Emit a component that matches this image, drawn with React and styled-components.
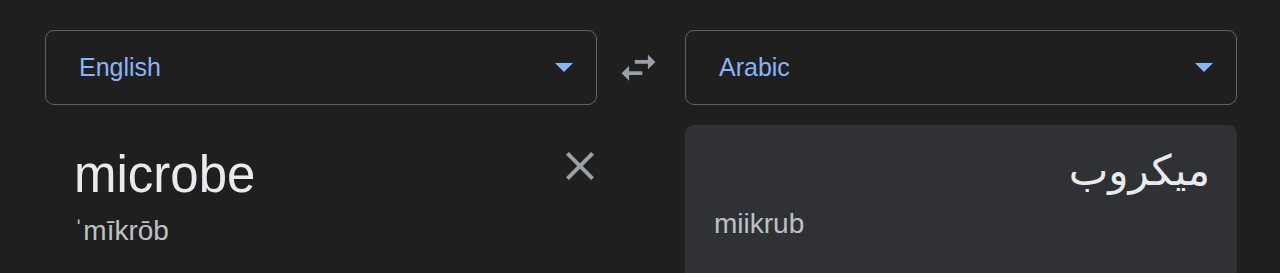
import React from "react";
import styled, { createGlobalStyle } from "styled-components";

const GlobalStyle = createGlobalStyle`
  html, body {
    margin: 0;
    padding: 0;
    background: #1f1f1f;
    font-family: "Liberation Sans", Arial, sans-serif;
  }
`;

const Page = styled.div`
  width: 1280px;
  height: 273px;
  overflow: hidden;
  box-sizing: border-box;
  padding: 30px 43px 0 45px;
  display: grid;
  grid-template-columns: 1fr 88px 1fr;
  grid-template-rows: 75px 1fr;
  row-gap: 20px;
  background: #1f1f1f;
`;

const Select = styled.div`
  box-sizing: border-box;
  border: 1px solid #5f6368;
  border-radius: 9px;
  display: flex;
  align-items: center;
  justify-content: space-between;
  padding: 0 23px 0 33px;
  color: #8ab4f8;
  font-size: 25px;
`;

const Label = styled.span`
  margin-top: 0;
`;

const SwapButton = styled.div`
  display: flex;
  align-items: center;
  justify-content: center;
  padding-right: 6px;
`;

const InputArea = styled.div`
  position: relative;
  padding: 20px 29px 0 29px;
`;

const Source = styled.div`
  color: #e8eaed;
  font-size: 51px;
  line-height: 60px;
`;

const Phonetic = styled.div`
  color: #bdc1c6;
  font-size: 28px;
  line-height: 32px;
  margin-top: 10px;
`;

const ClearButton = styled.div`
  position: absolute;
  top: 17px;
  right: -7px;
  width: 48px;
  height: 48px;
`;

const Output = styled.div`
  background: #303134;
  border-radius: 9px 9px 0 0;
  padding: 17px 27px 0 29px;
  display: flex;
  flex-direction: column;
`;

const Target = styled.div`
  direction: rtl;
  color: #e8eaed;
  font-family: "DejaVu Sans", sans-serif;
  font-size: 42px;
  line-height: 57px;
`;

const Translit = styled.div`
  color: #bdc1c6;
  font-size: 28px;
  line-height: 32px;
  margin-top: 9px;
`;

function Caret() {
  return (
    <svg width="18" height="9" viewBox="0 0 18 9">
      <path d="M0 0h18L9 9z" fill="#8ab4f8" />
    </svg>
  );
}

function LangSelect({ name }) {
  return (
    <Select>
      <Label>{name}</Label>
      <Caret />
    </Select>
  );
}

export default function App() {
  return (
    <>
      <GlobalStyle />
      <Page>
        <LangSelect name="English" />
        <SwapButton>
          <svg width="45" height="45" viewBox="0 0 24 24">
            <path
              d="M6.99 11L3 15l3.99 4v-3H14v-2H6.99v-3zM21 9l-3.99-4v3H10v2h7.01v3L21 9z"
              fill="#9aa0a6"
            />
          </svg>
        </SwapButton>
        <LangSelect name="Arabic" />
        <InputArea>
          <Source>microbe</Source>
          <Phonetic>ˈmīkrōb</Phonetic>
          <ClearButton>
            <svg width="48" height="48" viewBox="0 0 24 24">
              <path
                d="M19 6.41L17.59 5 12 10.59 6.41 5 5 6.41 10.59 12 5 17.59 6.41 19 12 13.41 17.59 19 19 17.59 13.41 12z"
                fill="#9aa0a6"
              />
            </svg>
          </ClearButton>
        </InputArea>
        <div />
        <Output>
          <Target>ميكروب</Target>
          <Translit>miikrub</Translit>
        </Output>
      </Page>
    </>
  );
}
